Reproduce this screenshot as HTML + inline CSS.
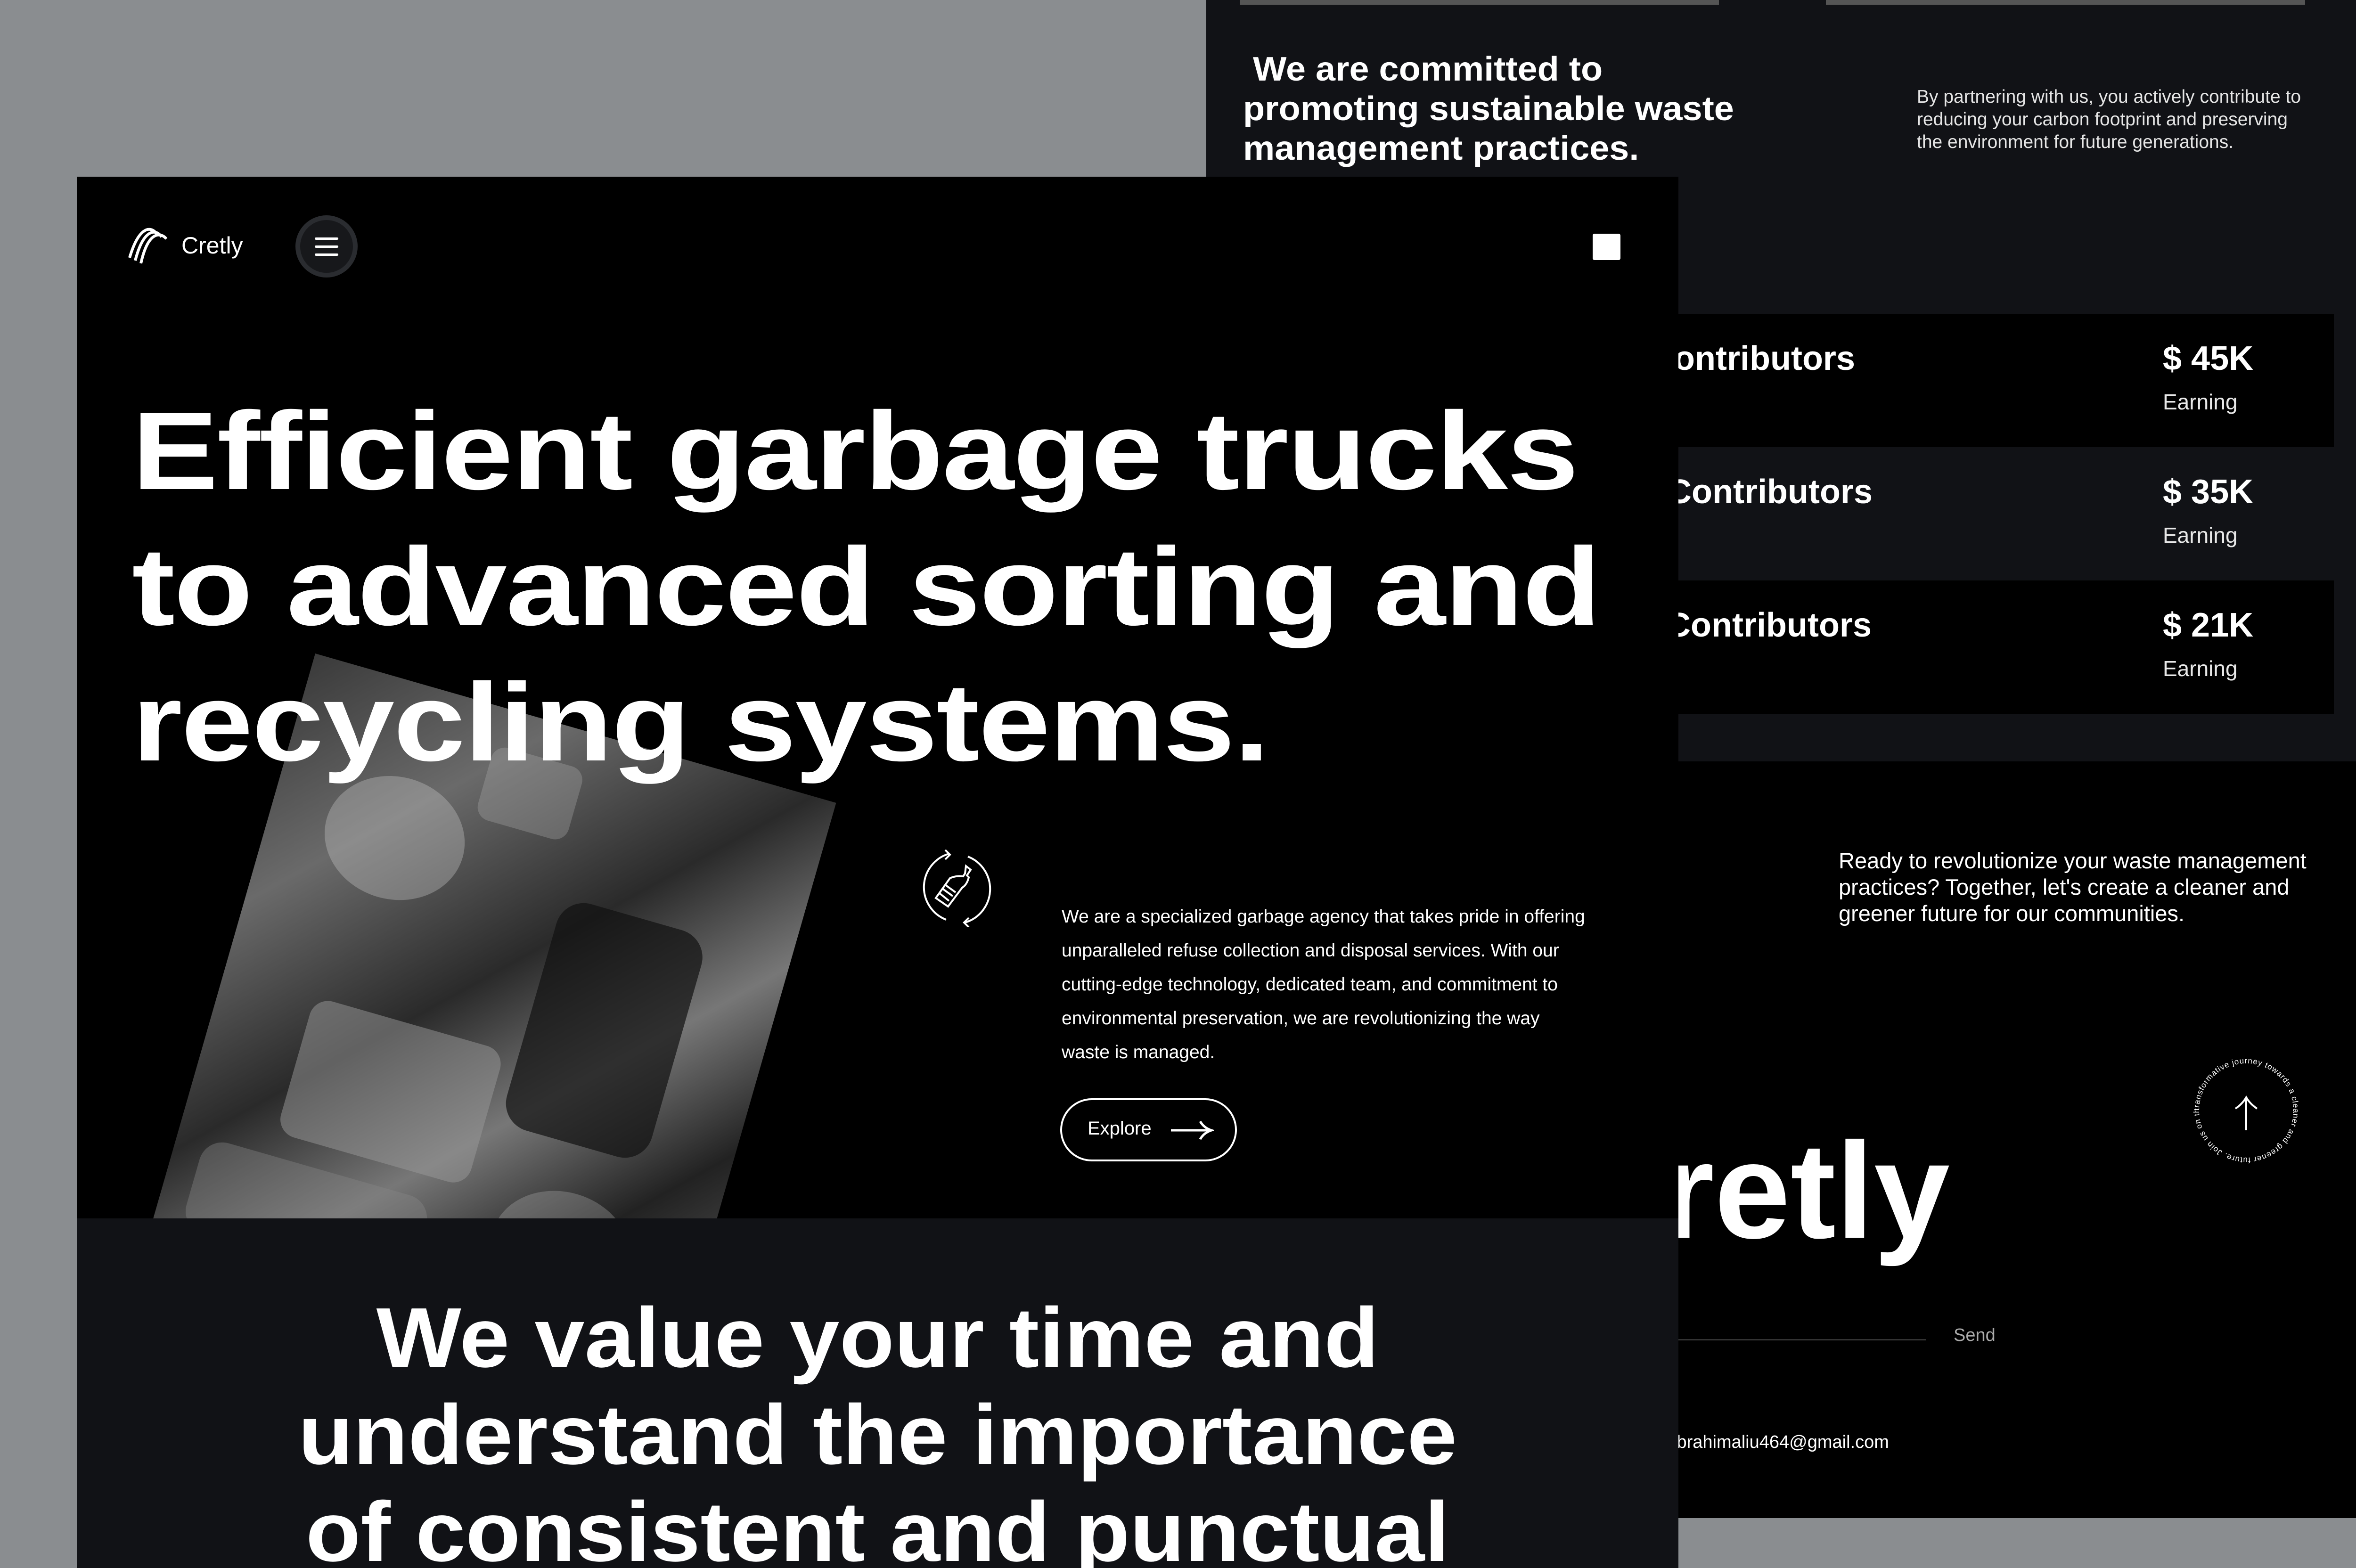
<!DOCTYPE html>
<html><head><meta charset="utf-8">
<style>
*{margin:0;padding:0;box-sizing:border-box}
html,body{width:5120px;height:3328px;overflow:hidden;background:#8a8d90;font-family:"Liberation Sans",sans-serif;color:#fff}
.abs{position:absolute}
#back{left:2560px;top:0;width:2472px;height:3222px;background:#000;overflow:hidden}
#backtop{left:0;top:0;width:2472px;height:1616px;background:#111216}
.row{left:0;width:2393px;height:283px;background:#000}
.row.d{background:#111216}
.contrib{font-weight:700;font-size:72px;white-space:nowrap}
.money{left:2030px;font-weight:700;font-size:72px}
.earn{left:2030px;font-size:46px;color:#e8e8e8}
#front{left:163px;top:375px;width:3399px;height:2953px;background:#111216;overflow:hidden}
#hero{left:0;top:0;width:3399px;height:2211px;background:#000;overflow:hidden}
h1{position:absolute;left:117px;top:438px;font-size:235px;line-height:288px;font-weight:700;letter-spacing:-2px;white-space:nowrap;transform-origin:0 0;transform:scaleX(1.167)}
h2{position:absolute;left:0;width:3399px;top:2362px;text-align:center;font-size:180px;line-height:206px;font-weight:700;white-space:nowrap;transform:scaleX(1.06)}
</style></head><body>

<div id="back" class="abs">
  <div id="backtop" class="abs"></div>
  <div class="abs" style="left:71px;top:0;width:1017px;height:10px;background:#555"></div>
  <div class="abs" style="left:1315px;top:0;width:1017px;height:10px;background:#555"></div>
  <div class="abs" style="left:78px;top:105px;font-size:72px;line-height:84px;font-weight:700;white-space:nowrap;transform-origin:0 0;transform:scaleX(1.05)">&nbsp;We are committed to<br>promoting sustainable waste<br>management practices.</div>
  <div class="abs" style="left:1508px;top:182px;font-size:39px;line-height:48px;color:#e6e6e6;white-space:nowrap">By partnering with us, you actively contribute to<br>reducing your carbon footprint and preserving<br>the environment for future generations.</div>

  <div class="abs row" style="top:666px"></div>
  <div class="abs row d" style="top:949px"></div>
  <div class="abs row" style="top:1232px"></div>
  <div class="abs contrib" style="right:1095px;top:720px">Top Contributors</div>
  <div class="abs contrib" style="right:1058px;top:1003px">Top Contributors</div>
  <div class="abs contrib" style="right:1060px;top:1286px">Top Contributors</div>
  <div class="abs money" style="top:720px">$ 45K</div>
  <div class="abs earn" style="top:826px">Earning</div>
  <div class="abs money" style="top:1003px">$ 35K</div>
  <div class="abs earn" style="top:1109px">Earning</div>
  <div class="abs money" style="top:1286px">$ 21K</div>
  <div class="abs earn" style="top:1392px">Earning</div>

  <div class="abs" style="left:1342px;top:1799px;font-size:47px;line-height:56px;white-space:nowrap">Ready to revolutionize your waste management<br>practices? Together, let's create a cleaner and<br>greener future for our communities.</div>
  <svg class="abs" style="left:2087px;top:2237px" width="240" height="240" viewBox="0 0 240 240">
    <defs><path id="cp" d="M120,120 m-100,0 a100,100 0 1,1 200,0 a100,100 0 1,1 -200,0"/></defs>
    <text font-size="17" fill="#fff" font-family="Liberation Sans" letter-spacing="1"><textPath href="#cp">transformative journey towards a cleaner and greener future. Join us on this</textPath></text>
    <path d="M120,162 V94 M97,116 Q112,106 120,92 Q128,106 143,116" stroke="#fff" stroke-width="4" fill="none"/>
  </svg>
  <div class="abs" style="left:756px;top:2382px;font-size:290px;line-height:290px;font-weight:700">Cretly</div>
  <div class="abs" style="left:1000px;top:2842px;width:528px;height:3px;background:#333"></div>
  <div class="abs" style="left:1586px;top:2813px;font-size:38px;color:#aaa">Send</div>
  <div class="abs" style="left:990px;top:3040px;font-size:38px">ibrahimaliu464@gmail.com</div>
</div>

<div id="front" class="abs">
  <div id="hero" class="abs">
    <div class="abs" style="left:506px;top:1012px;width:1150px;height:1600px;transform-origin:0 0;transform:rotate(16deg);overflow:hidden;background:linear-gradient(135deg,#3a3a3a 0%,#6a6a6a 20%,#2a2a2a 40%,#777 55%,#222 70%,#555 85%,#2a2a2a 100%)">
      <div class="abs" style="left:200px;top:700px;width:420px;height:300px;border-radius:40px;background:#9a9a9a;opacity:.5"></div>
      <div class="abs" style="left:650px;top:350px;width:320px;height:500px;border-radius:60px;background:#111;opacity:.7"></div>
      <div class="abs" style="left:120px;top:200px;width:300px;height:260px;border-radius:50%;background:#ccc;opacity:.35"></div>
      <div class="abs" style="left:420px;top:80px;width:200px;height:160px;border-radius:30px;background:#aaa;opacity:.35"></div>
      <div class="abs" style="left:60px;top:1050px;width:500px;height:200px;border-radius:50px;background:#888;opacity:.4"></div>
      <div class="abs" style="left:700px;top:950px;width:300px;height:250px;border-radius:50%;background:#bbb;opacity:.3"></div>
    </div>
    <svg class="abs" style="left:100px;top:100px" width="100" height="90" viewBox="0 0 100 90">
      <g fill="none" stroke="#fff" stroke-width="6">
        <path d="M12,72 Q28,18 50,12 Q62,10 70,22"/>
        <path d="M24,78 Q38,24 60,18 Q72,16 80,28"/>
        <path d="M36,84 Q48,30 70,24 Q82,22 90,32"/>
      </g>
    </svg>
    <div class="abs" style="left:222px;top:117px;font-size:50px">Cretly</div>
    <div class="abs" style="left:464px;top:82px;width:132px;height:132px;border-radius:50%;background:#17181b;border:10px solid #2a2c30"></div>
    <div class="abs" style="left:505px;top:129px;width:50px;height:5px;background:#fff;border-radius:3px"></div>
    <div class="abs" style="left:505px;top:146px;width:50px;height:5px;background:#fff;border-radius:3px"></div>
    <div class="abs" style="left:505px;top:163px;width:50px;height:5px;background:#fff;border-radius:3px"></div>
    <div class="abs" style="left:3217px;top:121px;width:59px;height:56px;background:#fff;border-radius:4px"></div>

    <h1>Efficient garbage trucks<br>to advanced sorting and<br>recycling systems.</h1>

    <svg class="abs" style="left:1785px;top:1427px" width="166" height="166" viewBox="0 0 166 166">
      <g fill="none" stroke="#fff" stroke-width="4">
        <path d="M66,10 A74,74 0 0,0 60,150"/>
        <path d="M58,2 L68,12 L58,22"/>
        <path d="M100,156 A74,74 0 0,0 106,16"/>
        <path d="M108,146 L98,156 L108,166"/>
        <path d="M102,36 L112,44 L104,56 L108,60 Q104,76 94,82 L64,122 L38,104 L68,62 Q80,56 96,58 L100,52 Z"/>
        <path d="M52,84 L74,100 M58,76 L80,92 M46,94 L66,110"/>
      </g>
    </svg>
    <div class="abs" style="left:2090px;top:1535px;font-size:39px;line-height:72px;white-space:nowrap">We are a specialized garbage agency that takes pride in offering<br>unparalleled refuse collection and disposal services. With our<br>cutting-edge technology, dedicated team, and commitment to<br>environmental preservation, we are revolutionizing the way<br>waste is managed.</div>
    <div class="abs" style="left:2087px;top:1956px;width:375px;height:134px;border:4px solid #fff;border-radius:67px"></div>
    <div class="abs" style="left:2145px;top:1998px;font-size:40px">Explore</div>
    <svg class="abs" style="left:2318px;top:1999px" width="95" height="50" viewBox="0 0 95 50"><path d="M4,25 H88 M66,6 Q74,20 90,25 Q74,30 66,44" fill="none" stroke="#fff" stroke-width="5"/></svg>
  </div>
  <h2>We value your time and<br>understand the importance<br>of consistent and punctual</h2>
</div>
</body></html>
